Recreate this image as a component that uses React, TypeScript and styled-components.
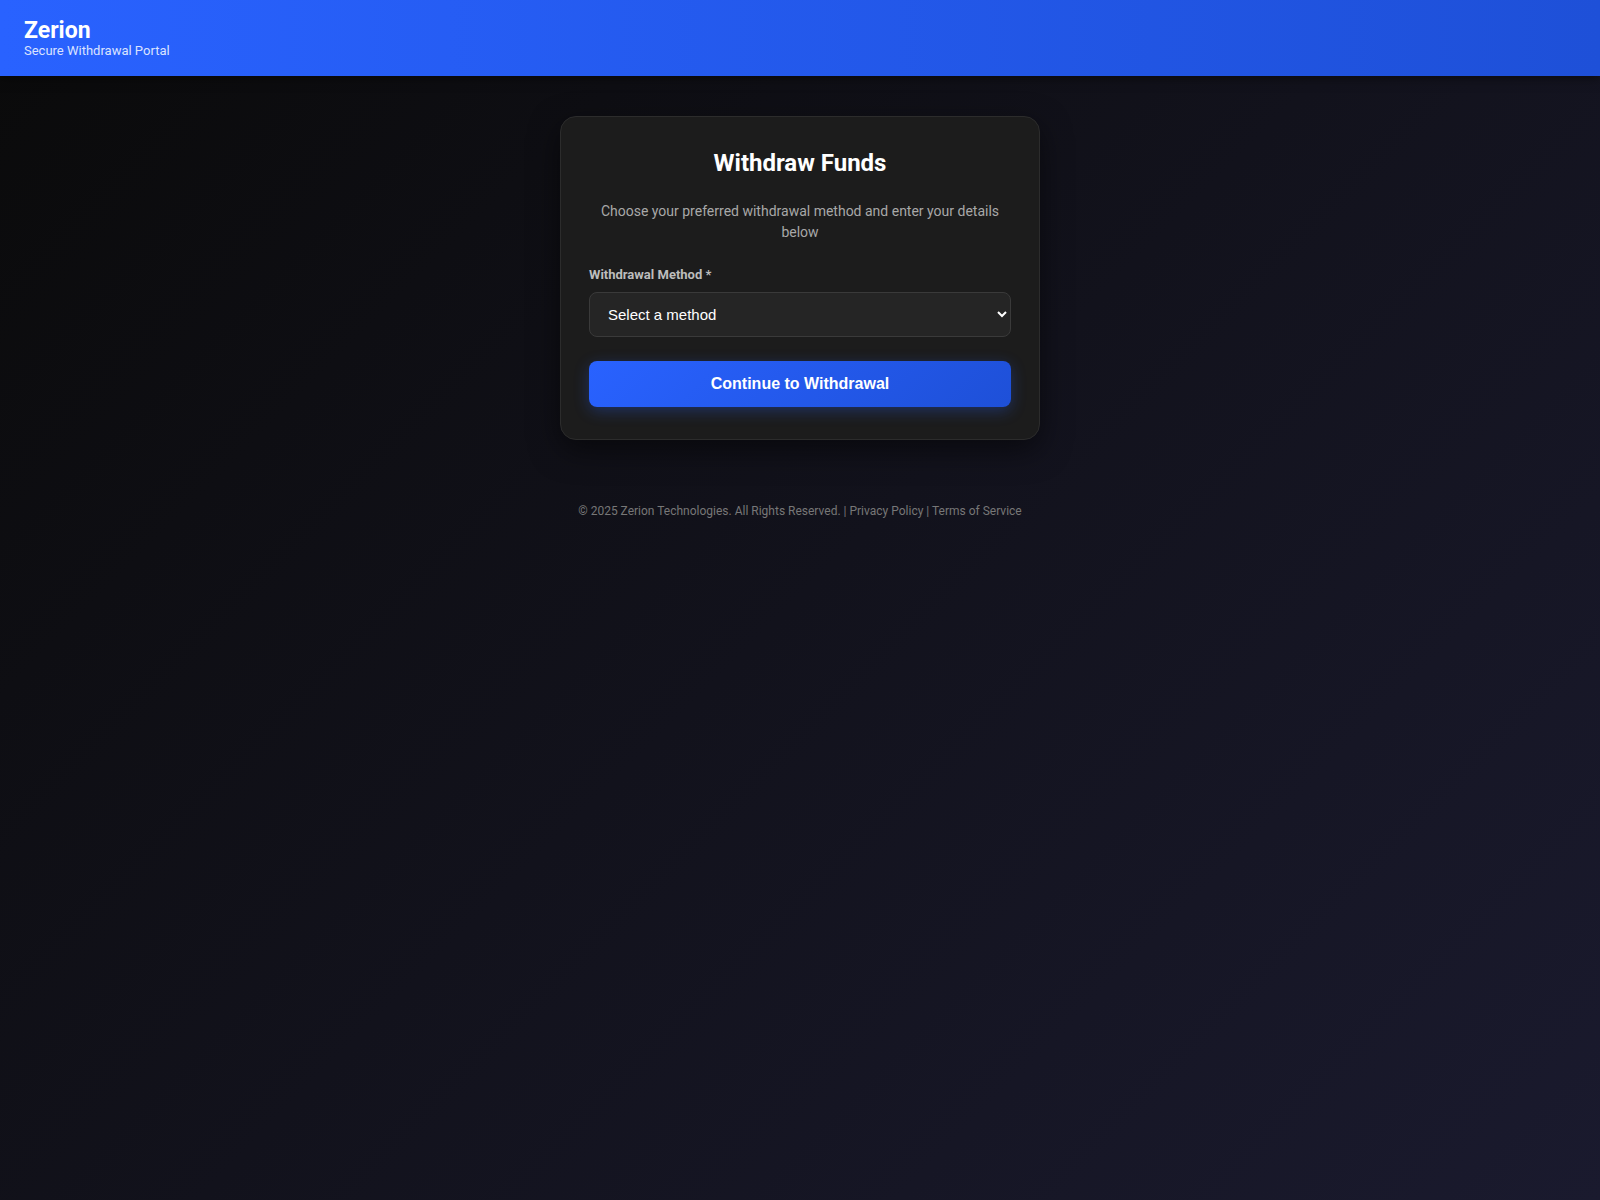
import React from "react";
import styled, { createGlobalStyle } from "styled-components";

const Global = createGlobalStyle`
  * { box-sizing: border-box; }
  html, body { margin: 0; padding: 0; }
  body {
    font-family: Roboto, "Liberation Sans", sans-serif;
    min-height: 1200px;
    background: linear-gradient(135deg, #0a0a0a 0%, #1a1a2e 100%);
    color: #fff;
  }
`;

const Page = styled.div`
  min-height: 1200px;
  display: flex;
  flex-direction: column;
`;

const Header = styled.header`
  height: 76px;
  padding: 18px 24px 0;
  background: linear-gradient(90deg, #2962ff 0%, #1e50d8 100%);
  box-shadow: 0 2px 10px rgba(0, 0, 0, 0.5);
`;

const Brand = styled.h1`
  margin: 0;
  font-size: 23px;
  font-weight: 700;
  line-height: 25px;
  color: #fff;
`;

const Tagline = styled.div`
  font-size: 13px;
  line-height: 15px;
  color: #dbe3ff;
`;

const Main = styled.main`
  display: flex;
  flex-direction: column;
  align-items: center;
  padding-top: 40px;
`;

const Card = styled.section`
  width: 480px;
  background: #1c1c1c;
  border: 1px solid #2c2c2c;
  border-radius: 16px;
  padding: 32px 28px;
  box-shadow: 0 10px 30px rgba(0, 0, 0, 0.5);
`;

const Title = styled.h2`
  margin: 0 0 23px;
  font-size: 24px;
  line-height: 29px;
  font-weight: 700;
  text-align: center;
  color: #fff;
`;

const Subtitle = styled.p`
  margin: 0 0 24px;
  font-size: 14px;
  line-height: 21px;
  text-align: center;
  color: #a8a8a8;
`;

const Label = styled.label`
  display: block;
  margin-bottom: 10px;
  font-size: 13px;
  line-height: 15px;
  font-weight: 700;
  color: #bdbdbd;
`;

const Select = styled.select`
  display: block;
  width: 100%;
  height: 45px;
  padding: 0 12px 0 14px;
  background: #252525;
  color: #fff;
  border: 1px solid #3a3a3a;
  border-radius: 8px;
  font-family: "Liberation Sans", Arial, sans-serif;
  font-size: 15px;
  color-scheme: dark;
  outline: none;
`;

const Button = styled.button`
  display: block;
  width: 100%;
  height: 46px;
  margin-top: 24px;
  border: none;
  border-radius: 8px;
  background: linear-gradient(135deg, #2962ff 0%, #1e50d8 100%);
  color: #fff;
  font-family: "Liberation Sans", Arial, sans-serif;
  font-size: 16px;
  font-weight: 700;
  box-shadow: 0 4px 15px rgba(41, 98, 255, 0.3);
  cursor: pointer;
`;

const Footer = styled.footer`
  margin-top: 64px;
  font-size: 12px;
  line-height: 14px;
  color: #777;
  text-align: center;
`;

const FooterLink = styled.a`
  color: #777;
  text-decoration: none;
`;

export default function App() {
  return (
    <Page>
      <Global />
      <Header>
        <Brand>Zerion</Brand>
        <Tagline>Secure Withdrawal Portal</Tagline>
      </Header>
      <Main>
        <Card>
          <Title>Withdraw Funds</Title>
          <Subtitle>
            Choose your preferred withdrawal method and enter your details below
          </Subtitle>
          <Label htmlFor="method">Withdrawal Method *</Label>
          <Select id="method" defaultValue="">
            <option value="">Select a method</option>
            <option value="bank">Bank Transfer</option>
            <option value="crypto">Crypto Wallet</option>
          </Select>
          <Button type="button">Continue to Withdrawal</Button>
        </Card>
        <Footer>
          © 2025 Zerion Technologies. All Rights Reserved. |{" "}
          <FooterLink href="#">Privacy Policy</FooterLink> |{" "}
          <FooterLink href="#">Terms of Service</FooterLink>
        </Footer>
      </Main>
    </Page>
  );
}
